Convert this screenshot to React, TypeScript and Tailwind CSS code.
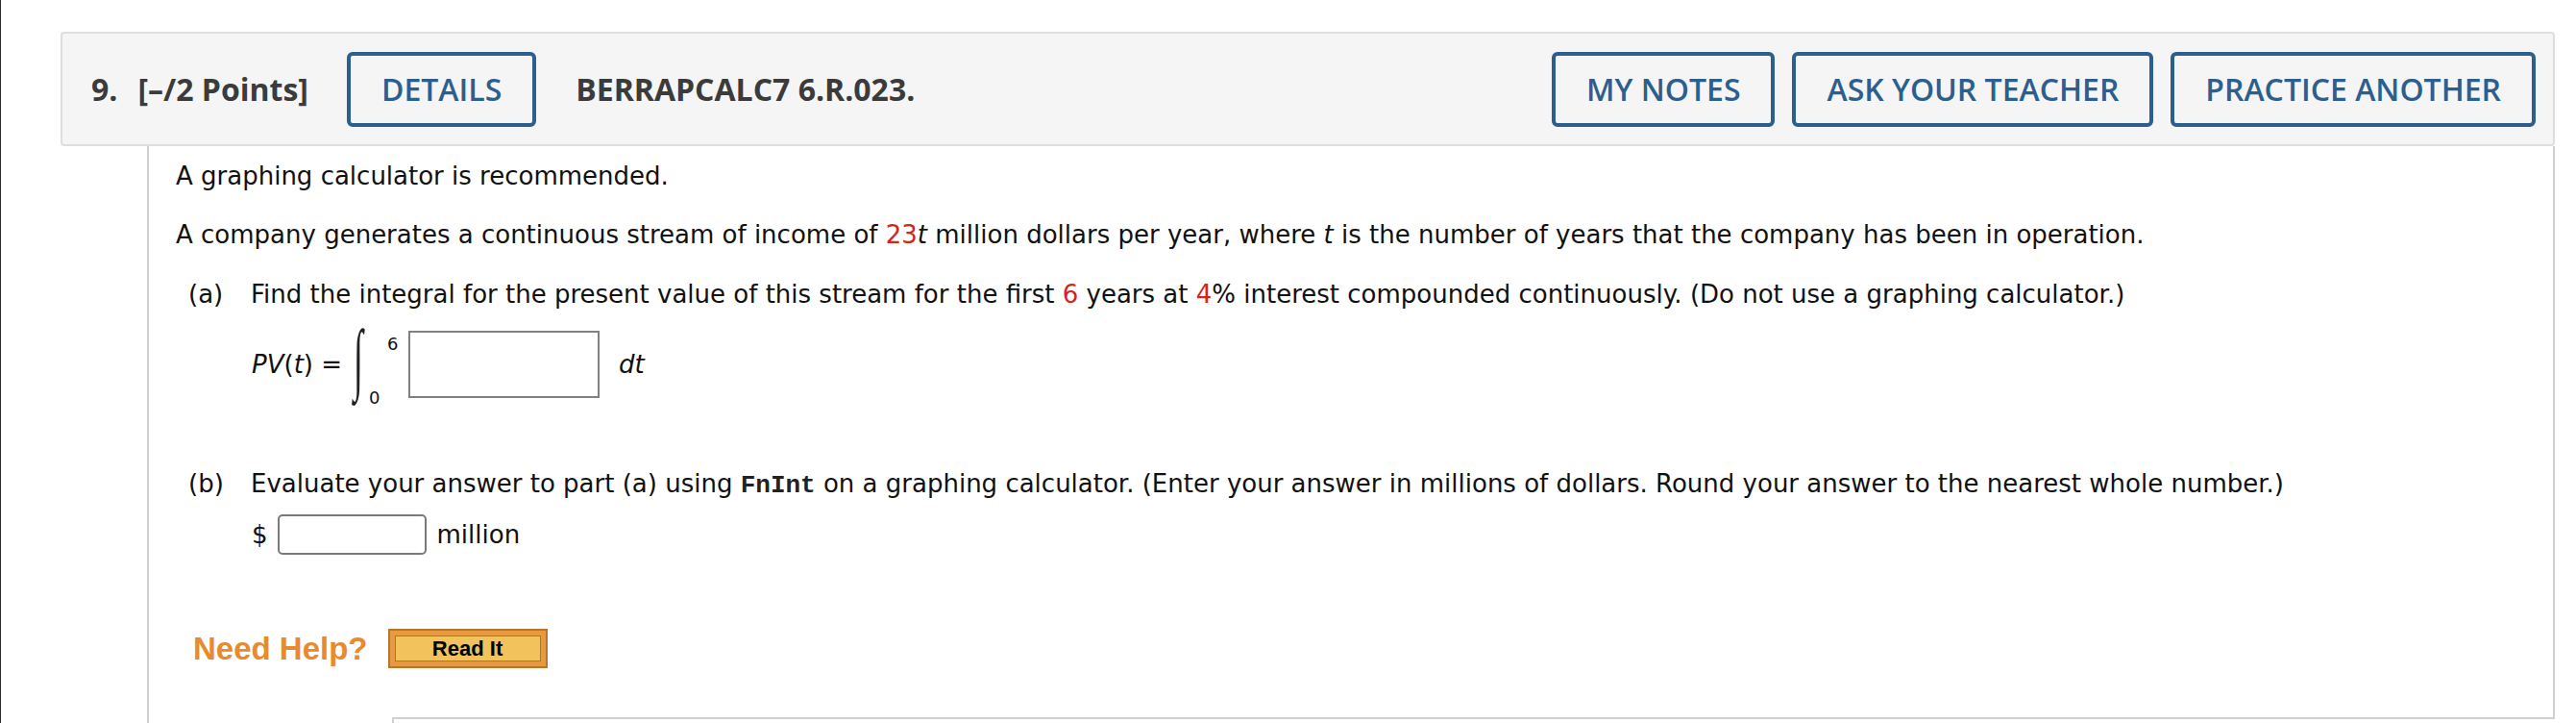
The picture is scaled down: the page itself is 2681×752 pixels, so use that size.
import React from "react";

const headBtn =
  "h-[78px] px-[32px] border-[4px] border-[#2d5f8e] rounded-[6px] text-[#2d5f8e] text-[32px] font-semibold flex items-center";

const Red = ({ children }: { children: React.ReactNode }) => (
  <span className="text-[#d1261c]">{children}</span>
);

export default function App() {
  return (
    <div className="h-[752px] w-[2681px] overflow-hidden bg-white border-l border-[#2b2b2b] pt-[33px] flex flex-col">
      {/* question header */}
      <div
        className="ml-[62px] w-[2596px] h-[119px] shrink-0 bg-[#f5f5f5] border-2 border-[#dedede] rounded-[4px] pl-[30px] pr-[18px] flex items-center"
        style={{ fontFamily: '"Open Sans", sans-serif' }}
      >
        <span className="text-[32px] font-bold text-[#3b3b3b]">9.</span>
        <span className="ml-[21px] text-[32px] font-bold text-[#3b3b3b]">[–/2 Points]</span>
        <button className={headBtn + " ml-[40px]"}>DETAILS</button>
        <span className="ml-[41px] text-[32px] font-bold text-[#3b3b3b]">BERRAPCALC7 6.R.023.</span>
        <div className="flex-1" />
        <div className="flex gap-[18px]">
          <button className={headBtn}>MY NOTES</button>
          <button className={headBtn}>ASK YOUR TEACHER</button>
          <button className={headBtn}>PRACTICE ANOTHER</button>
        </div>
      </div>

      {/* question body */}
      <div className="ml-[152px] w-[2506px] flex-1 border-l-2 border-[#d0d0d0] flex flex-col">
        <div
          className="h-[594px] shrink-0 border-r-2 border-[#d0d0d0] pl-[28px] pt-[12px] text-[26px] leading-[39px] text-[#111]"
          style={{ fontFamily: '"DejaVu Sans", Verdana, sans-serif' }}
        >
          <p>A graphing calculator is recommended.</p>
          <p className="mt-[22px]">
            A company generates a continuous stream of income of <Red>23</Red>
            <i>t</i> million dollars per year, where <i>t</i> is the number of years that the
            company has been in operation.
          </p>

          <div className="mt-[23px] flex">
            <span className="ml-[13px] w-[65px] shrink-0">(a)</span>
            <span>
              Find the integral for the present value of this stream for the first <Red>6</Red>{" "}
              years at <Red>4</Red>% interest compounded continuously. (Do not use a graphing
              calculator.)
            </span>
          </div>

          <div className="mt-[18px] pl-[79px] flex items-center h-[70px]">
            <span>
              <i>PV</i>(<i>t</i>) =
            </span>
            <div className="relative ml-[12px] w-[57px] h-[70px]">
              <span
                className="absolute left-0 top-[-12px] text-[36px] leading-none text-[#222] origin-top scale-y-[2.28]"
                style={{ fontFamily: '"Liberation Serif", serif' }}
              >
                ∫
              </span>
              <span className="absolute left-[35px] top-[5px] text-[18px] leading-none">6</span>
              <span className="absolute left-[16px] top-[61px] text-[18px] leading-none">0</span>
            </div>
            <input className="w-[199px] h-[70px] border-2 border-[#808080] bg-white outline-none" />
            <i className="ml-[20px]">dt</i>
          </div>

          <div className="mt-[70px] flex">
            <span className="ml-[13px] w-[65px] shrink-0">(b)</span>
            <span>
              Evaluate your answer to part (a) using{" "}
              <span className="font-bold text-[#222]" style={{ fontFamily: '"Liberation Mono", monospace' }}>
                FnInt
              </span>{" "}
              on a graphing calculator. (Enter your answer in millions of dollars. Round your
              answer to the nearest whole number.)
            </span>
          </div>

          <div className="mt-[10px] pl-[79px] flex items-center h-[42px]">
            <span>$</span>
            <input className="ml-[10px] w-[155px] h-[42px] border-2 border-[#7a7a7a] rounded-[5px] bg-white outline-none" />
            <span className="ml-[11px]">million</span>
          </div>

          <div className="mt-[77px] ml-[18px] flex items-center h-[41px]">
            <span
              className="text-[33px] font-bold text-[#e88a2f] leading-none"
              style={{ fontFamily: '"Liberation Sans", Arial, sans-serif' }}
            >
              Need Help?
            </span>
            <button className="ml-[21px] w-[166px] h-[41px] bg-[#e99a40] border-2 border-[#b5762f] p-[5px]">
              <span
                className="w-full h-full bg-[#f2c25c] border border-[#a6782f] flex items-center justify-center text-[22px] font-bold text-black"
                style={{ fontFamily: '"Liberation Sans", Arial, sans-serif' }}
              >
                Read It
              </span>
            </button>
          </div>
        </div>
        <div className="flex flex-1">
          <div className="w-[253px] shrink-0" />
          <div className="flex-1 border-t-2 border-l-2 border-[#d0d0d0]" />
        </div>
      </div>
    </div>
  );
}
